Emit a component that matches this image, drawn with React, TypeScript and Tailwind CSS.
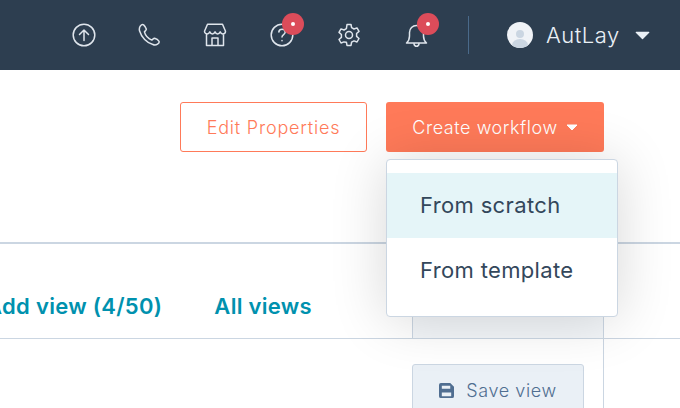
import React from 'react';

const font = { fontFamily: 'Inter, "Noto Sans", sans-serif' };

const NavIcon = ({ children, badge, className }: { children: React.ReactNode; badge?: boolean; className?: string }) => (
  <div className={`relative flex h-[24px] w-[24px] items-center justify-center ${className ?? ''}`}>
    <svg width="24" height="24" viewBox="0 0 24 24" fill="none" stroke="#dfe5ec" strokeWidth="1.5" strokeLinecap="round" strokeLinejoin="round">
      {children}
    </svg>
    {badge && (
      <span className="absolute left-[12px] top-[-10px] flex h-[22px] w-[22px] items-center justify-center rounded-full bg-[#dc4c5a]">
        <span className="h-[4px] w-[4px] rounded-full bg-white" />
      </span>
    )}
  </div>
);

const Caret = ({ w, h, color }: { w: number; h: number; color: string }) => (
  <svg width={w} height={h} viewBox="0 0 12 7" fill={color} stroke={color} strokeWidth="1" strokeLinejoin="round">
    <path d="M1 1h10L6 6Z" />
  </svg>
);

const App: React.FC = () => {
  return (
    <div className="relative h-[408px] w-[680px] overflow-hidden bg-white font-[350]" style={font}>
      <header className="flex h-[70px] items-center bg-[#2d3e50] pl-[72px]">
        <NavIcon>
          <circle cx="12" cy="12" r="10.8" />
          <path d="M12 17.500V7M7.500 11.500 12 7l4.500 4.500" />
        </NavIcon>
        <NavIcon className="ml-[41px]">
          <path d="M3.200 3.200C4.300 1.800 5.800 1.300 6.600 1.900c.9.800 2.300 3 2.700 4.200.3.900-1.300 2-1.900 2.800.9 3.400 4.300 6.900 7.400 8.200.8-.5 1.900-2 2.800-1.800 1.200.4 3.600 1.800 4.300 2.800.5.800-.2 2.200-1.400 3-1.300.9-3 1.100-4.600.4C10 20 4.300 14 2.500 7.800c-.4-1.800 0-3.400.7-4.600Z" />
        </NavIcon>
        <NavIcon className="ml-[42px]">
          <path d="M4.500 1.200h15l3 7c0 1.700-1.500 2.700-2.700 2.700s-2.100-.8-2.600-2c-.5 1.200-1.500 2-2.600 2s-2.100-.8-2.600-2c-.5 1.200-1.500 2-2.600 2s-2.100-.8-2.600-2c-.5 1.200-1.500 2-2.600 2S1.500 9.900 1.500 8.200ZM3.500 11v11.500h17V11M9 22.500v-7.500h6v7.500" />
        </NavIcon>
        <NavIcon badge className="ml-[43px]">
          <circle cx="12" cy="12" r="10.800" />
          <path d="M8.800 9c.3-1.700 1.700-2.700 3.300-2.700 1.800 0 3.100 1.200 3.100 2.700 0 2.500-3.200 2.600-3.200 5" />
          <path d="M12 17.500v.3" />
        </NavIcon>
        <NavIcon className="ml-[43px]">
          <circle cx="12" cy="12" r="3.500" />
          <path d="M10 1.500h4l.6 3.200 2.400 1.300 3-1.100 2 3.500-2.400 2.100v2.900l2.400 2.100-2 3.500-3-1.100-2.400 1.300-.6 3.200h-4l-.6-3.200L7 18.900l-3 1.100-2-3.500 2.400-2.100v-2.900L2 9.400l2-3.500 3 1.100 2.400-1.300Z" />
        </NavIcon>
        <NavIcon badge className="ml-[44px]">
          <path d="M1.500 20h20c-2-1.800-3-3.500-3-7V9.500c0-3.800-3-7-7-7s-7 3.200-7 7V13c0 3.500-1 5.200-3 7ZM9 21c.3 1.500 1.300 2.200 2.500 2.200s2.200-.7 2.500-2.200" />
        </NavIcon>
        <div className="ml-[39px] h-[38px] w-px bg-[#4a6a8a]" />
        <div className="ml-[38px] flex h-[26px] w-[26px] items-center justify-center overflow-hidden rounded-full bg-[#f0f3f7]">
          <svg width="26" height="26" viewBox="0 0 26 26">
            <circle cx="13" cy="12" r="4" fill="#cbd6e2" />
            <ellipse cx="13" cy="23" rx="8" ry="6" fill="#cbd6e2" />
          </svg>
        </div>
        <span className="ml-[13px] w-[89px] text-[22px] leading-none tracking-[0.5px] text-[#eaf0f6]">AutLay</span>
        <Caret w={15} h={9} color="#eaf0f6" />
      </header>

      <div className="flex h-[174px] items-start justify-end gap-[19px] border-b-2 border-[#cbd6e2] pr-[76px] pt-[32px]">
        <button className="flex h-[50px] w-[187px] items-center justify-center rounded-[3px] border border-[#ff7a59] bg-white pt-[1px] text-[18px] tracking-[0.8px] text-[#ff7a59]">
          Edit Properties
        </button>
        <button className="flex h-[50px] w-[218px] items-center justify-center gap-[8px] rounded-[3px] bg-[#ff7a59] pt-[1px] text-[18px] tracking-[0.55px] text-white">
          Create workflow
          <Caret w={12} h={7} color="#ffffff" />
        </button>
      </div>

      <div className="flex h-[95px] justify-end border-b border-[#cbd6e2] pr-[76px]">
        <div className="flex items-center gap-[52px] whitespace-nowrap pt-[30px] text-[22px] font-semibold tracking-[0.3px] text-[#0091ae]">
          <span>Add view (4/50)</span>
          <span className="mr-[100px]">All views</span>
        </div>
        <div className="flex w-[192px] shrink-0 items-center gap-[14px] border-x border-[#cbd6e2] bg-[#f3f6f9] pl-[28px] pt-[30px] text-[18px] text-[#b0c1d4]">
          <span className="h-[14px] w-[18px] rounded-[2px] bg-[#b0c1d4]" />
          Folders
        </div>
      </div>

      <div className="flex h-[70px] justify-end pr-[76px]">
        <div className="w-[192px] border-r border-[#cbd6e2] pt-[25px]">
          <button className="flex h-[50px] w-[172px] items-center justify-center gap-[12px] rounded-[3px] border border-[#cbd6e2] bg-[#eaf0f6] pt-[2px] text-[18px] tracking-[0.6px] text-[#506e91]">
            <svg width="15" height="15" viewBox="0 0 16 16" fill="#506e91">
              <path d="M2 0h10l4 4v10a2 2 0 0 1-2 2H2a2 2 0 0 1-2-2V2a2 2 0 0 1 2-2Zm1 3v3h9V3Zm0 7v4h10v-4Z" fillRule="evenodd" />
            </svg>
            Save view
          </button>
        </div>
      </div>

      {/* dropdown sits over the page */}
      <div className="absolute left-[386px] top-[159px] w-[232px] rounded-[4px] border border-[#cbd6e2] bg-white py-[13px] text-[22px] font-[380] tracking-[0.35px] text-[#33475b] shadow-[0_2px_56px_rgba(0,0,0,0.16)]">
        <div className="flex h-[65px] items-center bg-[#e5f5f8] pl-[33px]">From scratch</div>
        <div className="flex h-[65px] items-center pl-[33px]">From template</div>
      </div>
    </div>
  );
};

export default App;
